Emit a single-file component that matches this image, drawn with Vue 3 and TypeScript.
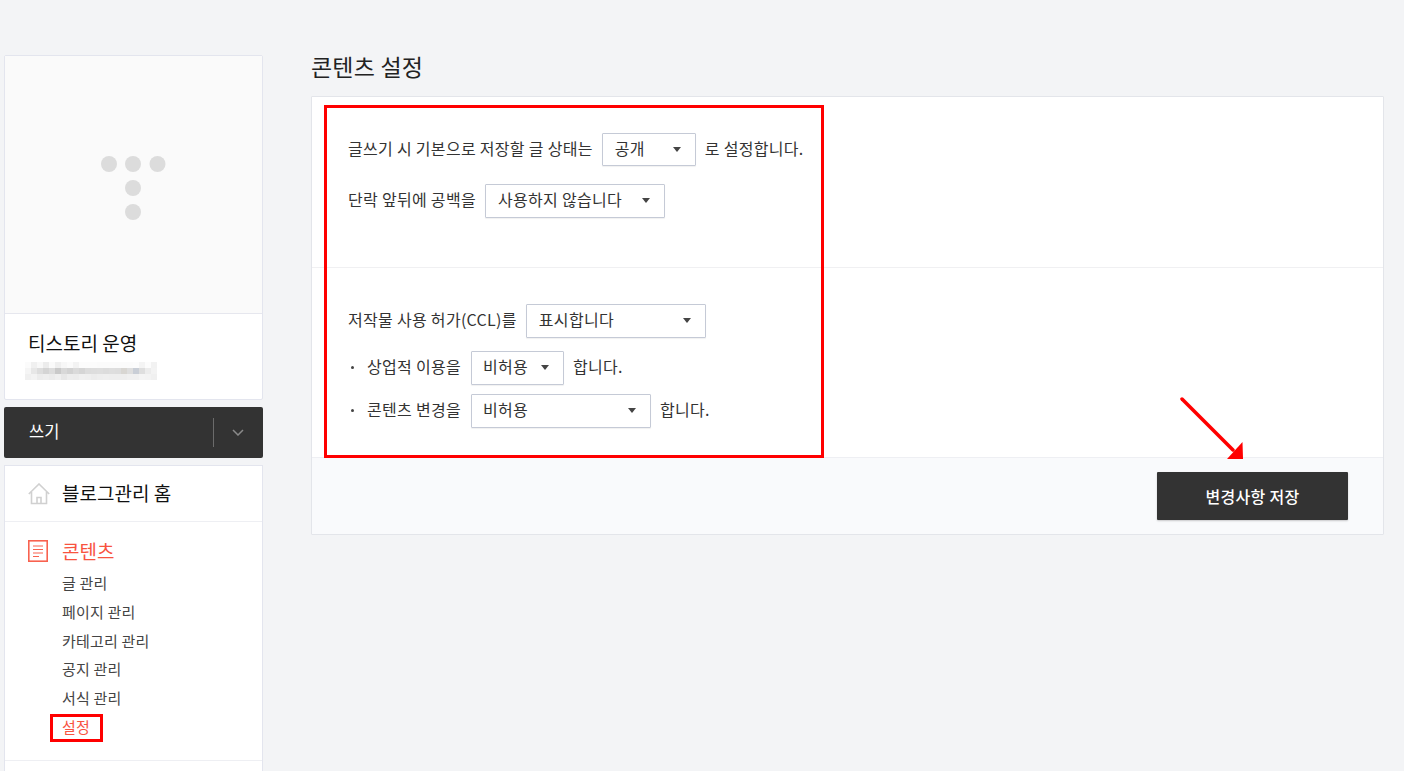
<script setup lang="ts">
const subs = ['글 관리', '페이지 관리', '카테고리 관리', '공지 관리', '서식 관리']
const blur: string[] = [
  'fbfbfb,f0f0f0,f8f8f8,ececec,fafafa,efefef,f7f7f7,fbfbfb,f3f3f3,fcfcfc,fcfcfc,fcfcfc,fbfbfb,fbfbfb,fbfbfb,fbfbfb,fbfbfb,fbfbfb,fcfcfc,f4f4f4,fcfcfc,f2f2f2',
  'f5f5f5,e7e7e7,dddddd,d4d4d4,dcdcdc,c9c9c9,d8d8d8,d2d2d2,dadada,d5d5d5,dcdcdc,dddddd,dedede,dcdcdc,dedede,dddddd,d8d6d2,dedede,c9ced6,dedede,ececec,f3f3f3',
  'f0f0f0,f3f3f3,ececec,eeeeee,ebebeb,efefef,e7e7e7,ededed,ececec,f0f0f0,efefef,ececec,eeeeee,efefef,eeeeee,eeeeee,eeeeee,f0f0f0,f0f0f0,f4f4f4,f3f3f3,f0f0f0'
].flatMap((r) => r.split(',').map((c) => '#' + c))
</script>

<template>
  <div class="page">
    <aside class="side">
      <section class="profile">
        <div class="thumb">
          <svg width="66" height="66" viewBox="0 0 66 66">
            <g fill="#dcdcdc">
              <circle cx="8" cy="8" r="8" /><circle cx="32" cy="8" r="8" /><circle cx="56.500" cy="8" r="8" />
              <circle cx="32" cy="32" r="8" /><circle cx="32" cy="56" r="8" />
            </g>
          </svg>
        </div>
        <div class="info">
          <strong class="blog">티스토리 운영</strong>
          <div class="blur"><i v-for="(c, i) in blur" :key="i" :style="{ background: c }"></i></div>
        </div>
      </section>

      <div class="write">
        <span class="write-label">쓰기</span>
        <span class="write-more">
          <svg width="12" height="7" viewBox="0 0 12 7"><path d="M1 1l5 5 5-5" fill="none" stroke="#8a8a8a" stroke-width="1.5" /></svg>
        </span>
      </div>

      <nav class="menu">
        <a class="home">
          <svg width="22" height="22" viewBox="0 0 22 22" fill="none" stroke="#d0d0d0" stroke-width="1.600">
            <path d="M.8 11 11 1l10.200 10M3.500 9v11.500h15V9M9 20.500v-6h4v6" />
          </svg>
          <span>블로그관리 홈</span>
        </a>
        <div class="group">
          <a class="group-title">
            <svg width="20" height="22" viewBox="0 0 20 22" fill="none" stroke="#f8624f">
              <rect x=".8" y=".8" width="18.400" height="20.400" stroke-width="1.600" />
              <path d="M5 6h10M5 9.500h10M5 13h10M5 16.500h6" stroke-width="1" />
            </svg>
            <span>콘텐츠</span>
          </a>
          <ul class="subs">
            <li v-for="s in subs" :key="s">{{ s }}</li>
            <li class="active">설정</li>
          </ul>
        </div>
      </nav>
    </aside>

    <main class="main">
      <h1 class="title">콘텐츠 설정</h1>
      <div class="panel">
        <section class="sec sec-a">
          <div class="row r1">
            <span>글쓰기 시 기본으로 저장할 글 상태는</span>
            <span class="sel w94"><b>공개</b></span>
            <span>로 설정합니다.</span>
          </div>
          <div class="row r2">
            <span>단락 앞뒤에 공백을</span>
            <span class="sel w180"><b>사용하지 않습니다</b></span>
          </div>
        </section>
        <section class="sec sec-b">
          <div class="row r3">
            <span>저작물 사용 허가(CCL)를</span>
            <span class="sel w180"><b>표시합니다</b></span>
          </div>
          <div class="row r4">
            <span class="dot">상업적 이용을</span>
            <span class="sel w93"><b>비허용</b></span>
            <span>합니다.</span>
          </div>
          <div class="row r5">
            <span class="dot">콘텐츠 변경을</span>
            <span class="sel w180"><b>비허용</b></span>
            <span>합니다.</span>
          </div>
        </section>
        <footer class="foot">
          <button class="save" type="button">변경사항 저장</button>
        </footer>
      </div>
    </main>

    <div class="mark mark-main"></div>
    <div class="mark mark-sub"></div>
    <svg class="arrow" width="70" height="68" viewBox="0 0 70 68">
      <path d="M2 2 53 53" stroke="#ff0000" stroke-width="3.500" stroke-linecap="round" fill="none" />
      <path d="M63 62 47 62 62.500 45z" fill="#ff0000" />
    </svg>
  </div>
</template>

<style>
html, body { margin: 0; background: #f3f4f6; }
</style>

<style scoped>
.page {
  position: relative;
  height: 771px;
  overflow: hidden;
  display: flex;
  align-items: flex-start;
  padding: 55px 0 0 4px;
  box-sizing: border-box;
  font-family: "Noto Sans CJK KR", "Noto Sans", sans-serif;
  color: #333;
}
.side { width: 259px; flex: none; display: flex; flex-direction: column; }
.profile { border: 1px solid #e3e5ee; border-radius: 2px; background: #fff; height: 345px; box-sizing: border-box; }
.thumb {
  height: 257px;
  background: #fafafa;
  border-bottom: 1px solid #e6e7ee;
  display: flex;
  align-items: center;
  justify-content: center;
}
.thumb svg { margin: 8px 0 0 1px; }
.info { padding: 15px 0 0 23px; }
.blog { display: block; font-weight: 400; font-size: 19px; line-height: 28px; color: #111; }
.blur { display: grid; grid-template-columns: repeat(22, 6px); grid-auto-rows: 6px; margin: 5px 0 0 -3px; width: 132px; }
.blur i { display: block; }
.write {
  margin-top: 7px;
  height: 51px;
  background: #333;
  border-radius: 2px;
  display: flex;
  align-items: center;
  color: #fff;
  font-size: 16.500px;
}
.write-label { flex: 1; padding: 0 0 3px 25px; line-height: 24px; }
.write-more {
  width: 50px;
  height: 29px;
  border-left: 1px solid #6b6b6b;
  display: flex;
  align-items: center;
  justify-content: center;
  padding-right: 2px;
  box-sizing: border-box;
}
.menu { margin-top: 7px; height: 400px; background: #fff; border: 1px solid #e3e5ee; border-bottom: 0; box-sizing: border-box; }
.home {
  height: 55px;
  border-bottom: 1px solid #eeeff3;
  display: flex;
  align-items: center;
  gap: 12px;
  padding-left: 23px;
  font-size: 19px;
  color: #111;
}
.home span { padding-bottom: 3px; }
.group { padding: 17px 0 18px 23px; border-bottom: 1px solid #eeeff3; }
.group-title { display: flex; align-items: center; gap: 14px; height: 24px; font-size: 19px; color: #f8533f; }
.group-title span { padding-bottom: 2px; }
.subs { list-style: none; margin: 6px 0 0; padding: 0 0 0 34px; font-size: 15px; letter-spacing: 0.2px; }
.subs li { height: 28.800px; line-height: 28px; color: #444; }
.subs .active { color: #f8533f; }
.main { margin-left: 48px; width: 1073px; flex: none; margin-top: -55px; }
.title { margin: 0; padding-top: 49px; height: 47px; font-size: 23px; letter-spacing: 0.2px; font-weight: 400; line-height: 34px; color: #222; }
.panel { border: 1px solid #e3e5ea; border-radius: 1px; background: #fff; }
.sec-a { height: 170px; border-bottom: 1px solid #f0f0f2; }
.sec-b { height: 189px; }
.row { display: flex; align-items: center; padding-left: 36px; font-size: 16px; letter-spacing: 0.3px; color: #333; line-height: 22px; gap: 9px; height: 34px; }
.row > span:not(.sel), .sel b { padding-bottom: 4px; }
.r1 { padding-top: 36px; height: 33px; }
.r1 .sel { height: 33px; }
.r2 { margin-top: 18px; }
.r3 { padding-top: 36px; }
.r4 { margin-top: 13px; }
.r5 { margin-top: 9px; }
.dot { position: relative; padding-left: 19px; margin-right: 1px; }
.dot::before { content: ""; position: absolute; left: 3px; top: 11px; width: 3px; height: 3px; border-radius: 50%; background: #444; }
.sel {
  position: relative;
  height: 34px;
  box-sizing: border-box;
  border: 1px solid #c5cad6;
  border-radius: 1px;
  box-shadow: 0 1px 1px rgba(0, 0, 0, 0.06);
  display: flex;
  align-items: center;
  padding-left: 12px;
  background: #fff;
}
.r4 .sel, .r5 .sel { padding-left: 11px; }
.sel b { font-weight: 400; }
.sel::after {
  content: "";
  position: absolute;
  right: 14px;
  top: 13px;
  border: 4.500px solid transparent;
  border-top: 5px solid #444;
  border-bottom: 0;
}
.w94 { width: 94px; }
.w93 { width: 93px; }
.w180 { width: 180px; }
.foot {
  height: 77px;
  background: #f9fafc;
  border-top: 1px solid #eeeff3;
  display: flex;
  justify-content: flex-end;
  padding: 14px 35px 0 0;
  box-sizing: border-box;
}
.save {
  width: 191px;
  height: 48px;
  border: 0;
  border-radius: 1px;
  background: #333;
  color: #fff;
  font: 500 16px "Noto Sans CJK KR", sans-serif;
  letter-spacing: 0.3px;
  box-shadow: 0 1px 2px rgba(0, 0, 0, 0.2);
}
.mark { position: absolute; border: 3px solid #ff0000; box-sizing: border-box; }
.mark-main { left: 324px; top: 105px; width: 500px; height: 353px; }
.mark-sub { left: 50px; top: 714px; width: 53px; height: 28px; }
.arrow { position: absolute; left: 1180px; top: 397px; }
</style>
